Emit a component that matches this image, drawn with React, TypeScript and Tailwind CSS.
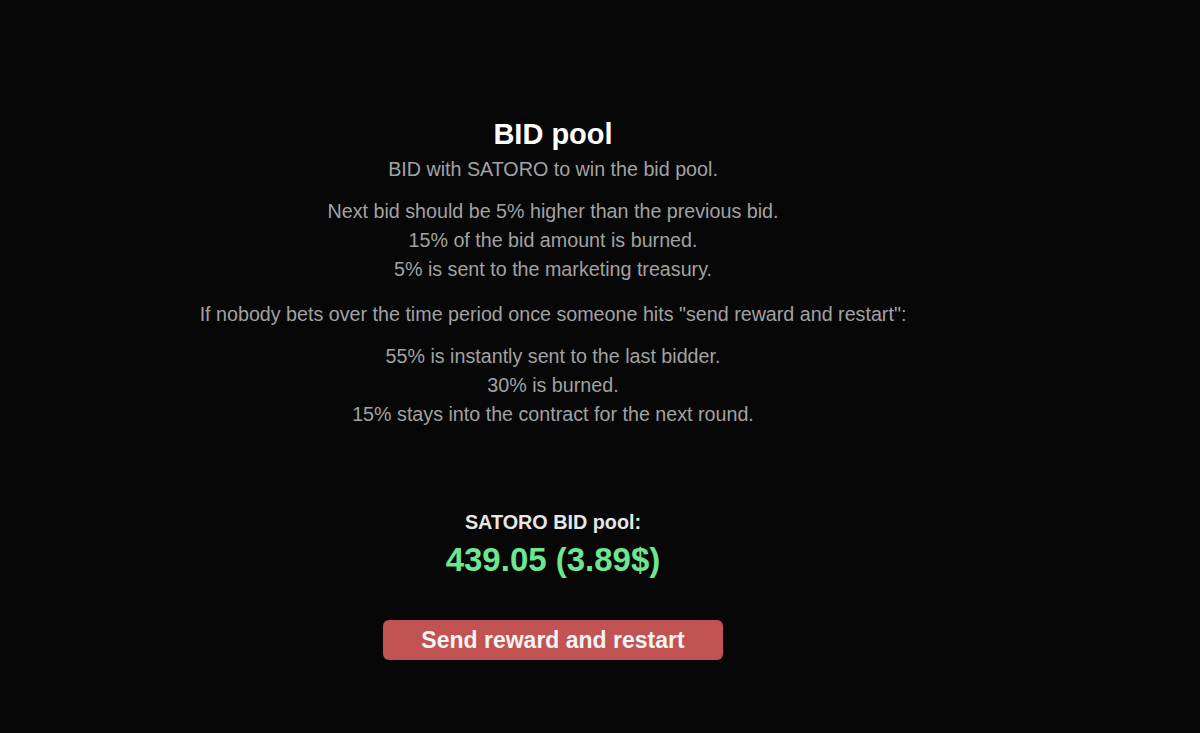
export default function App() {
  return (
    <div className="min-h-screen w-full bg-[#070707] font-['Liberation_Sans',Arial,sans-serif]">
      <div className="flex flex-col items-center pr-[94px] pt-[117px] text-center">
        {/* Intro */}
        <h1 className="text-[29px] leading-[34px] font-bold text-white">BID pool</h1>
        <p className="mt-[4px] text-[19.7px] leading-[29px] text-[#a2a2a2]">
          BID with SATORO to win the bid pool.
        </p>

        <div className="mt-[13px] text-[19.7px] leading-[29px] text-[#a2a2a2]">
          <p>Next bid should be 5% higher than the previous bid.</p>
          <p>15% of the bid amount is burned.</p>
          <p>5% is sent to the marketing treasury.</p>
        </div>

        <p className="mt-[16px] text-[19.7px] leading-[29px] text-[#a2a2a2]">
          If nobody bets over the time period once someone hits "send reward and restart":
        </p>

        <div className="mt-[13px] text-[19.7px] leading-[29px] text-[#a2a2a2]">
          <p>55% is instantly sent to the last bidder.</p>
          <p>30% is burned.</p>
          <p>15% stays into the contract for the next round.</p>
        </div>

        {/* Pool */}
        <div className="mt-[81px] text-[19.8px] leading-[24px] font-bold text-[#e6e6e6]">SATORO BID pool:</div>
        <div className="mt-[6px] text-[33px] leading-[40px] font-bold text-[#6ee690]">439.05 (3.89$)</div>

        <button className="mt-[40px] h-[40px] w-[340px] rounded-[6px] bg-[#c15452] text-[23px] font-bold text-[#f4f4f4]">
          Send reward and restart
        </button>
      </div>
    </div>
  );
}
